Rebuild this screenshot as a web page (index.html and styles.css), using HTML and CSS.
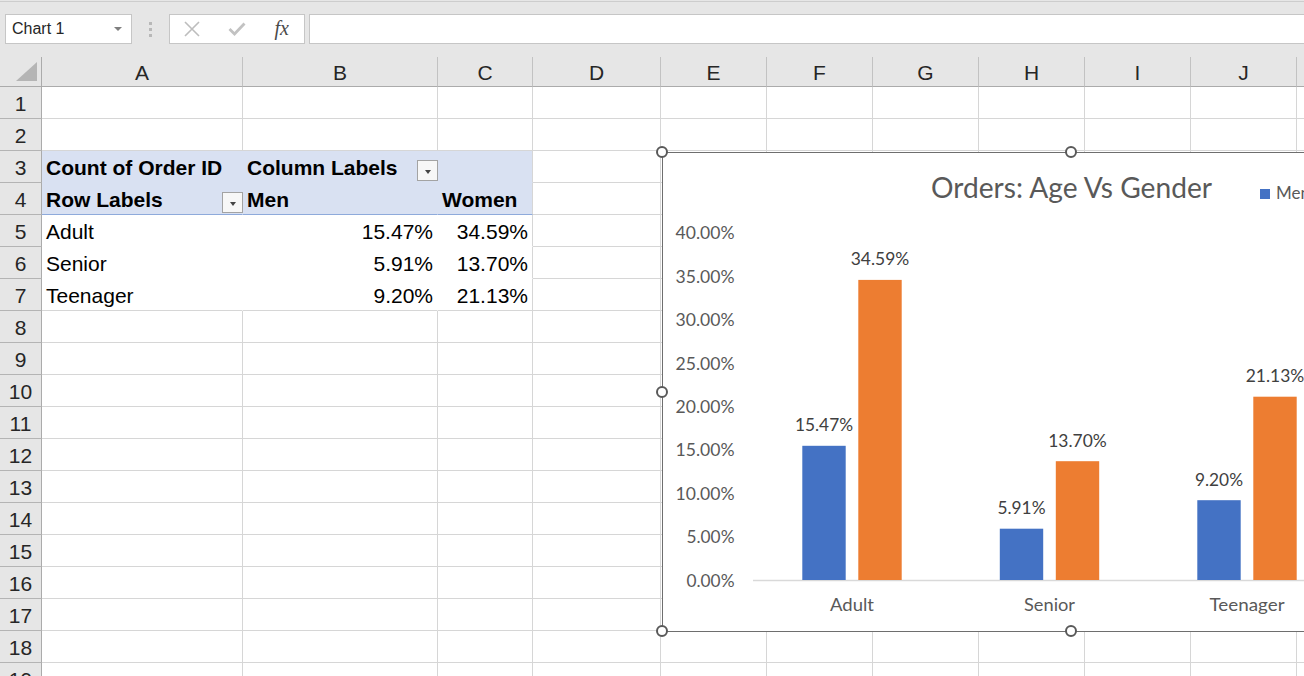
FILE: index.html
```html
<!DOCTYPE html>
<html lang="en">
<head>
<meta charset="utf-8">
<title>Excel - Chart 1</title>
<link rel="stylesheet" href="styles.css">
</head>
<body>
<div class="topbar">
  <div class="edge"></div>
  <div class="fbar">
    <div class="namebox"><span>Chart 1</span><i class="dd"></i></div>
    <div class="grip"><i></i><i></i><i></i></div>
    <div class="fxbox">
      <span class="fx-btn"><svg width="16" height="16" viewBox="0 0 16 16"><path d="M1 1 L15 15 M15 1 L1 15" stroke="#bdbdbd" stroke-width="1.6" fill="none"/></svg></span>
      <span class="fx-btn"><svg width="18" height="14" viewBox="0 0 18 14"><path d="M1.5 7 L6.5 12 L16.5 1.5" stroke="#c2c2c2" stroke-width="2.8" fill="none"/></svg></span>
      <span class="fx-btn fx">fx</span>
    </div>
    <div class="finput"></div>
  </div>
</div>

<div class="sheet">
  <div class="corner"><svg width="22" height="20" viewBox="0 0 22 20"><path d="M21 0 L21 19 L0 19 Z" fill="#b5b5b5"/></svg></div>
  <div class="ch">A</div><div class="ch">B</div><div class="ch">C</div><div class="ch">D</div><div class="ch">E</div><div class="ch">F</div><div class="ch">G</div><div class="ch">H</div><div class="ch">I</div><div class="ch">J</div><div class="ch"></div>

  <div class="rh">1</div><div class="c"></div><div class="c"></div><div class="c"></div><div class="c"></div><div class="c"></div><div class="c"></div><div class="c"></div><div class="c"></div><div class="c"></div><div class="c"></div><div class="c"></div>
  <div class="rh">2</div><div class="c"></div><div class="c"></div><div class="c"></div><div class="c"></div><div class="c"></div><div class="c"></div><div class="c"></div><div class="c"></div><div class="c"></div><div class="c"></div><div class="c"></div>

  <div class="rh">3</div>
  <div class="c ph pr">Count of Order ID</div>
  <div class="c ph pr hasdd"><span>Column Labels</span><span class="pdd"><i></i></span></div>
  <div class="c ph"></div>
  <div class="c"></div><div class="c"></div><div class="c"></div><div class="c"></div><div class="c"></div><div class="c"></div><div class="c"></div><div class="c"></div>

  <div class="rh">4</div>
  <div class="c ph pr pb hasdd"><span>Row Labels</span><span class="pdd"><i></i></span></div>
  <div class="c ph pr pb">Men</div>
  <div class="c ph pb">Women</div>
  <div class="c"></div><div class="c"></div><div class="c"></div><div class="c"></div><div class="c"></div><div class="c"></div><div class="c"></div><div class="c"></div>

  <div class="rh">5</div>
  <div class="c wr wb">Adult</div>
  <div class="c wr wb num">15.47%</div>
  <div class="c wb num">34.59%</div>
  <div class="c"></div><div class="c"></div><div class="c"></div><div class="c"></div><div class="c"></div><div class="c"></div><div class="c"></div><div class="c"></div>

  <div class="rh">6</div>
  <div class="c wr wb">Senior</div>
  <div class="c wr wb num">5.91%</div>
  <div class="c wb num">13.70%</div>
  <div class="c"></div><div class="c"></div><div class="c"></div><div class="c"></div><div class="c"></div><div class="c"></div><div class="c"></div><div class="c"></div>

  <div class="rh">7</div>
  <div class="c wr">Teenager</div>
  <div class="c wr num">9.20%</div>
  <div class="c num">21.13%</div>
  <div class="c"></div><div class="c"></div><div class="c"></div><div class="c"></div><div class="c"></div><div class="c"></div><div class="c"></div><div class="c"></div>

  <div class="rh">8</div><div class="c"></div><div class="c"></div><div class="c"></div><div class="c"></div><div class="c"></div><div class="c"></div><div class="c"></div><div class="c"></div><div class="c"></div><div class="c"></div><div class="c"></div>
  <div class="rh">9</div><div class="c"></div><div class="c"></div><div class="c"></div><div class="c"></div><div class="c"></div><div class="c"></div><div class="c"></div><div class="c"></div><div class="c"></div><div class="c"></div><div class="c"></div>
  <div class="rh">10</div><div class="c"></div><div class="c"></div><div class="c"></div><div class="c"></div><div class="c"></div><div class="c"></div><div class="c"></div><div class="c"></div><div class="c"></div><div class="c"></div><div class="c"></div>
  <div class="rh">11</div><div class="c"></div><div class="c"></div><div class="c"></div><div class="c"></div><div class="c"></div><div class="c"></div><div class="c"></div><div class="c"></div><div class="c"></div><div class="c"></div><div class="c"></div>
  <div class="rh">12</div><div class="c"></div><div class="c"></div><div class="c"></div><div class="c"></div><div class="c"></div><div class="c"></div><div class="c"></div><div class="c"></div><div class="c"></div><div class="c"></div><div class="c"></div>
  <div class="rh">13</div><div class="c"></div><div class="c"></div><div class="c"></div><div class="c"></div><div class="c"></div><div class="c"></div><div class="c"></div><div class="c"></div><div class="c"></div><div class="c"></div><div class="c"></div>
  <div class="rh">14</div><div class="c"></div><div class="c"></div><div class="c"></div><div class="c"></div><div class="c"></div><div class="c"></div><div class="c"></div><div class="c"></div><div class="c"></div><div class="c"></div><div class="c"></div>
  <div class="rh">15</div><div class="c"></div><div class="c"></div><div class="c"></div><div class="c"></div><div class="c"></div><div class="c"></div><div class="c"></div><div class="c"></div><div class="c"></div><div class="c"></div><div class="c"></div>
  <div class="rh">16</div><div class="c"></div><div class="c"></div><div class="c"></div><div class="c"></div><div class="c"></div><div class="c"></div><div class="c"></div><div class="c"></div><div class="c"></div><div class="c"></div><div class="c"></div>
  <div class="rh">17</div><div class="c"></div><div class="c"></div><div class="c"></div><div class="c"></div><div class="c"></div><div class="c"></div><div class="c"></div><div class="c"></div><div class="c"></div><div class="c"></div><div class="c"></div>
  <div class="rh">18</div><div class="c"></div><div class="c"></div><div class="c"></div><div class="c"></div><div class="c"></div><div class="c"></div><div class="c"></div><div class="c"></div><div class="c"></div><div class="c"></div><div class="c"></div>
  <div class="rh">19</div><div class="c"></div><div class="c"></div><div class="c"></div><div class="c"></div><div class="c"></div><div class="c"></div><div class="c"></div><div class="c"></div><div class="c"></div><div class="c"></div><div class="c"></div>

  <div class="chart">
    <svg class="plot" width="816" height="478" viewBox="0 0 816 478">
      <text class="title" x="408.5" y="44.5" text-anchor="middle" textLength="281" lengthAdjust="spacingAndGlyphs">Orders: Age Vs Gender</text>
      <rect x="597" y="36" width="10" height="10" fill="#4472c4"/>
      <text class="legend" x="613" y="46">Men</text>

      <g class="ylab" text-anchor="end">
        <text x="71.5" y="86.3" textLength="59" lengthAdjust="spacingAndGlyphs">40.00%</text>
        <text x="71.5" y="129.7" textLength="59" lengthAdjust="spacingAndGlyphs">35.00%</text>
        <text x="71.5" y="173.1" textLength="59" lengthAdjust="spacingAndGlyphs">30.00%</text>
        <text x="71.5" y="216.5" textLength="59" lengthAdjust="spacingAndGlyphs">25.00%</text>
        <text x="71.5" y="259.9" textLength="59" lengthAdjust="spacingAndGlyphs">20.00%</text>
        <text x="71.5" y="303.3" textLength="59" lengthAdjust="spacingAndGlyphs">15.00%</text>
        <text x="71.5" y="346.7" textLength="59" lengthAdjust="spacingAndGlyphs">10.00%</text>
        <text x="71.5" y="390.1" textLength="48" lengthAdjust="spacingAndGlyphs">5.00%</text>
        <text x="71.5" y="433.5" textLength="48" lengthAdjust="spacingAndGlyphs">0.00%</text>
      </g>

      <line x1="90" y1="427.5" x2="816" y2="427.5" stroke="#d9d9d9" stroke-width="1.5"/>

      <g class="bars">
        <rect x="139.3" y="292.8" width="43.4" height="134.2" fill="#4472c4"/>
        <rect x="195.3" y="126.9" width="43.4" height="300.1" fill="#ed7d31"/>
        <rect x="336.8" y="375.7" width="43.4" height="51.3" fill="#4472c4"/>
        <rect x="392.8" y="308.2" width="43.4" height="118.8" fill="#ed7d31"/>
        <rect x="534.3" y="347.2" width="43.4" height="79.8" fill="#4472c4"/>
        <rect x="590.3" y="243.7" width="43.4" height="183.3" fill="#ed7d31"/>
      </g>

      <g class="dlab" text-anchor="middle">
        <text x="161" y="278.1" textLength="58" lengthAdjust="spacingAndGlyphs">15.47%</text>
        <text x="217" y="112.2" textLength="58.5" lengthAdjust="spacingAndGlyphs">34.59%</text>
        <text x="358.5" y="361" textLength="48" lengthAdjust="spacingAndGlyphs">5.91%</text>
        <text x="414.5" y="293.5" textLength="58.5" lengthAdjust="spacingAndGlyphs">13.70%</text>
        <text x="556" y="332.5" textLength="48" lengthAdjust="spacingAndGlyphs">9.20%</text>
        <text x="612" y="229" textLength="58.5" lengthAdjust="spacingAndGlyphs">21.13%</text>
      </g>

      <g class="xlab" text-anchor="middle">
        <text x="189" y="457.5" textLength="44" lengthAdjust="spacingAndGlyphs">Adult</text>
        <text x="386.5" y="457.5" textLength="51" lengthAdjust="spacingAndGlyphs">Senior</text>
        <text x="584" y="457.5" textLength="75" lengthAdjust="spacingAndGlyphs">Teenager</text>
      </g>
    </svg>
    <span class="handle h-tl"></span>
    <span class="handle h-tc"></span>
    <span class="handle h-ml"></span>
    <span class="handle h-bl"></span>
    <span class="handle h-bc"></span>
  </div>
</div>
</body>
</html>
```
FILE: styles.css
```css
* { box-sizing: border-box; }
html, body { margin: 0; padding: 0; }
body {
  width: 1304px;
  height: 676px;
  overflow: hidden;
  background: #fff;
  font-family: "Liberation Sans", Arial, sans-serif;
  color: #000;
}

/* formula bar */
.topbar { height: 57px; background: #e6e6e6; padding-top: 1px; }
.edge { height: 1px; background: #cdcdcd; }
.fbar { display: flex; height: 30px; margin-top: 12px; padding-left: 5px; }
.namebox {
  width: 127px;
  background: #fff;
  border: 1px solid #c6c6c6;
  display: flex;
  align-items: center;
  justify-content: space-between;
  padding: 0 9px 0 6px;
  font-size: 16px;
  color: #262626;
}
.namebox .dd {
  width: 0; height: 0;
  border-left: 4px solid transparent;
  border-right: 4px solid transparent;
  border-top: 4px solid #7f7f7f;
}
.grip {
  width: 37px;
  display: flex;
  flex-direction: column;
  align-items: center;
  justify-content: center;
  gap: 3px;
}
.grip i { display: block; width: 3px; height: 3px; background: #b8b8b8; }
.fxbox { width: 136px; background: #fff; border: 1px solid #c6c6c6; display: flex; }
.fx-btn { width: 45px; display: flex; align-items: center; justify-content: center; }
.fx-btn.fx {
  font-family: "Liberation Serif", "Times New Roman", serif;
  font-style: italic;
  font-size: 20px;
  color: #4a4a4a;
  padding-bottom: 2px;
}
.finput { flex: 1; margin-left: 4px; margin-right: -4px; background: #fff; border: 1px solid #c6c6c6; }

/* sheet grid */
.sheet {
  position: relative;
  display: grid;
  grid-template-columns: 42px 201px 195px 95px 128px 106px 106px 106px 106px 106px 106px 1fr;
  grid-template-rows: 30px;
  grid-auto-rows: 32px;
  font-size: 21px;
}
.corner {
  background: #e6e6e6;
  border-right: 1px solid #ababab;
  border-bottom: 1px solid #ababab;
  display: flex;
  justify-content: flex-end;
  align-items: flex-end;
  padding: 0 3px 4px 0;
}
.corner svg { display: block; }
.ch {
  background: #e6e6e6;
  border-right: 1px solid #c2c2c2;
  border-bottom: 1px solid #ababab;
  text-align: center;
  line-height: 31px;
  color: #262626;
  overflow: hidden;
}
.rh {
  background: #e6e6e6;
  border-right: 1px solid #ababab;
  border-bottom: 1px solid #b4b4b4;
  text-align: center;
  line-height: 30px;
  padding-top: 2px;
  color: #262626;
}
.c {
  border-right: 1px solid #d6d6d6;
  border-bottom: 1px solid #d6d6d6;
  line-height: 30px;
  padding: 2px 4px 0 4px;
  white-space: nowrap;
}
.num { text-align: right; }

/* pivot table */
.ph { background: #d9e1f2; border-bottom-color: #d9e1f2; font-weight: bold; }
.ph.pr { border-right-color: #d9e1f2; }
.ph.pb { border-bottom-color: #8eaadb; }
.wr { border-right-color: #fff; }
.wb { border-bottom-color: #fff; }
.hasdd { display: flex; justify-content: space-between; padding-right: 0; }
.pdd {
  align-self: flex-end;
  width: 21px;
  height: 21px;
  margin: 0 -1px 1px 0;
  border: 1px solid #a3a3a3;
  background: #f7f7f7;
  display: flex;
  align-items: center;
  justify-content: center;
}
.pdd i {
  display: block;
  width: 0; height: 0;
  margin-top: 2px;
  border-left: 3.5px solid transparent;
  border-right: 3.5px solid transparent;
  border-top: 4px solid #444;
}

/* chart */
.chart {
  position: absolute;
  left: 662px;
  top: 95px;
  width: 818px;
  height: 480px;
  border: 1px solid #6e6e6e;
  background: #fff;
}
.plot { display: block; font-family: Lato, "Open Sans", sans-serif; }
.title { font-size: 28px; fill: #595959; }
.legend { font-size: 17px; fill: #595959; }
.ylab { font-size: 16.5px; fill: #595959; }
.dlab { font-size: 16.5px; fill: #404040; }
.xlab { font-size: 17px; fill: #595959; }
.handle {
  position: absolute;
  width: 12px;
  height: 12px;
  border: 2px solid #595959;
  background: #fff;
  border-radius: 50%;
}
.h-tl { left: -7px; top: -7px; }
.h-tc { left: calc(50% - 6px); top: -7px; }
.h-ml { left: -7px; top: calc(50% - 6px); }
.h-bl { left: -7px; bottom: -6px; }
.h-bc { left: calc(50% - 6px); bottom: -6px; }
```
